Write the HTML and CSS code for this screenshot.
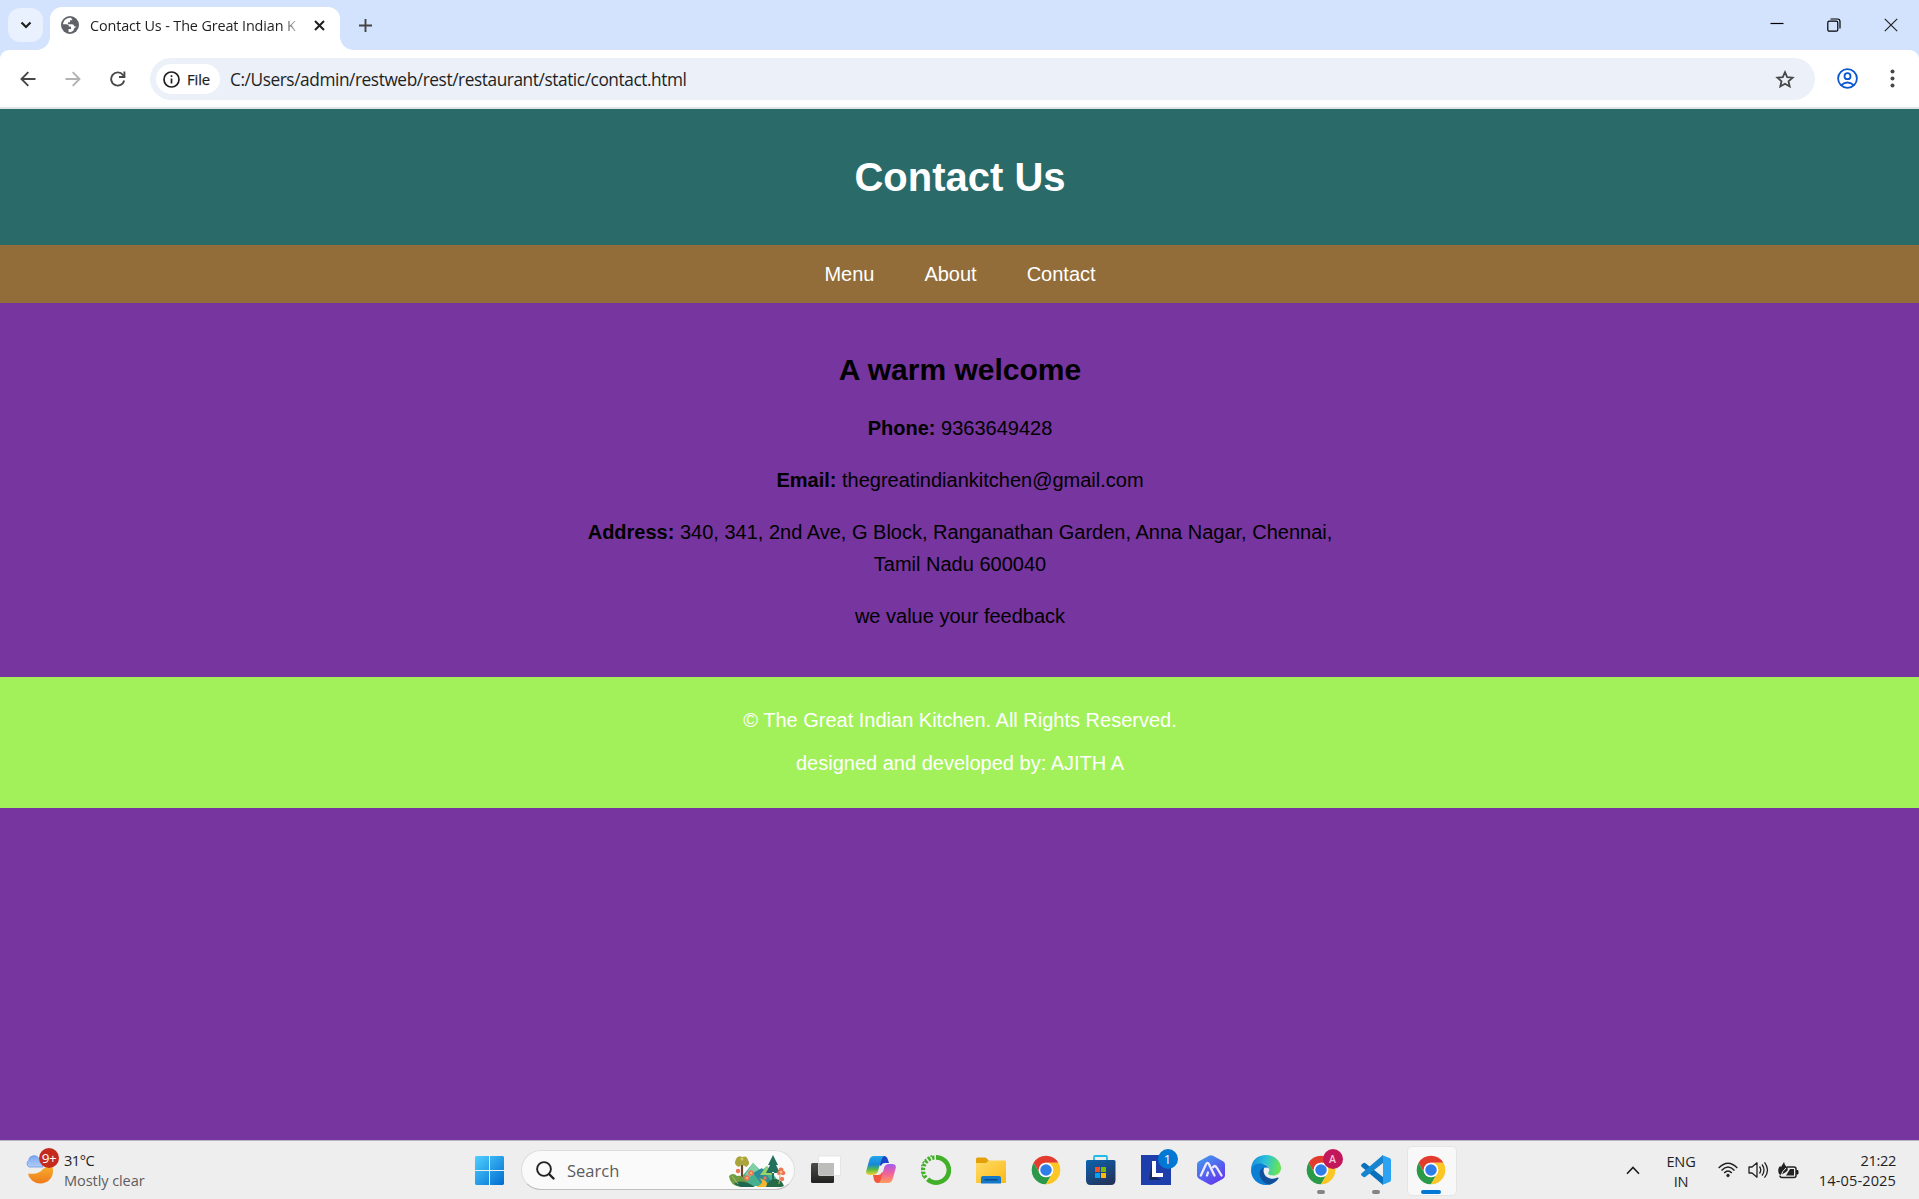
FILE: index.html
```html
<!DOCTYPE html>
<html lang="en">
<head>
<meta charset="utf-8">
<title>Contact Us - The Great Indian Kitchen</title>
<link rel="stylesheet" href="styles.css">
</head>
<body>
<svg class="defs" width="0" height="0" aria-hidden="true">
  <symbol id="chrome" viewBox="1 1 46 46">
    <path fill="#e33b2e" d="M24 13H43.05A22 22 0 0 0 4.95 13L14.47 29.5A11 11 0 0 1 24 13Z"/>
    <path fill="#2a9a48" d="M14.47 29.5L4.95 13A22 22 0 0 0 24 46L33.53 29.5A11 11 0 0 1 14.47 29.5Z"/>
    <path fill="#fcc624" d="M33.53 29.5L24 46A22 22 0 0 0 43.05 13H24A11 11 0 0 1 33.53 29.5Z"/>
    <circle cx="24" cy="24" r="11.2" fill="#fff"/><circle cx="24" cy="24" r="8.8" fill="#2f7de9"/>
  </symbol>
</svg>

<div class="tabstrip">
  <button class="tab-search" aria-label="Search tabs"><svg width="12" height="8" viewBox="0 0 12 8"><path d="M1.5 1.5L6 6L10.500 1.500" fill="none" stroke="#1f1f1f" stroke-width="2.2"/></svg></button>
  <div class="tab">
    <svg class="globe" width="18" height="18" viewBox="0 0 18 18"><circle cx="9" cy="9" r="9" fill="#5f6368"/><path d="M10 1.800A7.300 7.300 0 0 0 1.800 8.200L5.600 8.300Q8 8.500 8 10.500L10 10.800V13H7.500V15.800L9.500 16.200Q13 15 13 12.500L15.500 10.500H13.500Q12.800 8.300 11 8.200H7V6.300H9V4.200H11.500Z" fill="#fff"/></svg>
    <span class="tab-title">Contact Us - The Great Indian K</span>
    <svg class="tab-close" width="11" height="11" viewBox="0 0 11 11"><path d="M1 1L10 10M10 1L1 10" stroke="#1f1f1f" stroke-width="2"/></svg>
  </div>
  <svg class="new-tab" width="13" height="13" viewBox="0 0 13 13"><path d="M6.500 0V13M0 6.500H13" stroke="#444" stroke-width="1.900"/></svg>
  <div class="window-controls">
    <svg width="14" height="14" viewBox="0 0 14 14"><path d="M.5 5.500H13.500" stroke="#000" stroke-width="1.200"/></svg>
    <svg width="14" height="14" viewBox="0 0 14 14"><rect x=".8" y="3.200" width="10" height="10" rx="1.500" fill="none" stroke="#000" stroke-width="1.200"/><path d="M3.500 1H10.500Q13 1 13 3.500V10.500" fill="none" stroke="#000" stroke-width="1.200"/></svg>
    <svg width="14" height="14" viewBox="0 0 14 14"><path d="M.8.8L13.200 13.200M13.200.8L.8 13.200" stroke="#222" stroke-width="1.200"/></svg>
  </div>
</div>

<div class="toolbar-wrap">
<div class="toolbar">
  <svg class="nav-icon" width="16" height="16" viewBox="0 0 16 16"><path d="M15.500 8H2M8.300 1.200L1.500 8L8.300 14.800" fill="none" stroke="#474747" stroke-width="1.900"/></svg>
  <svg class="nav-icon" width="16" height="16" viewBox="0 0 16 16"><path d="M.5 8H14M7.700 1.200L14.500 8L7.700 14.800" fill="none" stroke="#b2b2b2" stroke-width="1.900"/></svg>
  <svg class="nav-icon" width="16" height="16" viewBox="0 0 16 16"><path d="M14.200 9.500A6.600 6.600 0 1 1 13 4L14.500 5.800" fill="none" stroke="#474747" stroke-width="1.900"/><path d="M14.400.6V6H9" fill="none" stroke="#474747" stroke-width="1.900"/></svg>
  <div class="omnibox">
    <span class="chip"><svg width="17" height="17" viewBox="0 0 17 17"><circle cx="8.500" cy="8.500" r="7.500" fill="none" stroke="#1f1f1f" stroke-width="1.700"/><path d="M8.500 7.500V12.500M8.500 4.300V6.100" stroke="#1f1f1f" stroke-width="1.700"/></svg><span class="chip-label">File</span></span>
    <span class="url">C:/Users/admin/restweb/rest/restaurant/static/contact.html</span>
    <svg class="star" width="20" height="19" viewBox="0 0 20 19"><path d="M10 2.200L12.200 7.100L17.600 7.600L13.500 11.200L14.700 16.500L10 13.700L5.300 16.500L6.500 11.200L2.400 7.600L7.800 7.100Z" fill="none" stroke="#474747" stroke-width="1.800"/></svg>
  </div>
  <svg class="profile" width="21" height="21" viewBox="0 0 21 21" fill="none" stroke="#0b57d0" stroke-width="1.800"><circle cx="10.500" cy="10.500" r="9.400"/><circle cx="10.500" cy="8.200" r="3"/><path d="M4.200 17.200Q10.500 11.900 16.800 17.200"/></svg>
  <svg class="more" width="5" height="19" viewBox="0 0 5 19" fill="#474747"><circle cx="2.500" cy="2.500" r="2"/><circle cx="2.500" cy="9.500" r="2"/><circle cx="2.500" cy="16.500" r="2"/></svg>
</div>
</div>

<div class="page">
  <header class="page-header"><h1>Contact Us</h1></header>
  <nav class="page-nav"><a>Menu</a><a>About</a><a>Contact</a></nav>
  <main class="content">
    <h2>A warm welcome</h2>
    <p><strong>Phone:</strong> 9363649428</p>
    <p><strong>Email:</strong> thegreatindiankitchen@gmail.com</p>
    <p><strong>Address:</strong> 340, 341, 2nd Ave, G Block, Ranganathan Garden, Anna Nagar, Chennai, Tamil Nadu 600040</p>
    <p>we value your feedback</p>
  </main>
  <footer class="page-footer">
    <p>© The Great Indian Kitchen. All Rights Reserved.</p>
    <p>designed and developed by: AJITH A</p>
  </footer>
</div>

<div class="taskbar">
  <div class="weather">
    <div class="weather-icon">
      <svg width="30" height="30" viewBox="0 0 30 30"><defs><linearGradient id="mn" x2="0" y2="1"><stop stop-color="#f9b52e"/><stop offset="1" stop-color="#ee7a1c"/></linearGradient><linearGradient id="cl" x2="0" y2="1"><stop stop-color="#7ba6ec"/><stop offset="1" stop-color="#b0ccfa"/></linearGradient></defs><path d="M18 14Q14 20 3 18.500A12.500 11.500 0 0 0 15 28.500A12.500 12.500 0 0 0 28 15Q28 12 26 9Z" fill="url(#mn)"/><path d="M4 12A4 4 0 0 1 3.500 5.500A5.500 5.500 0 0 1 14 4Q18 5 18 12Z" fill="url(#cl)" stroke="#6d9ae6" stroke-width=".8"/></svg>
      <span class="alert">9+</span>
    </div>
    <div class="weather-text"><span>31°C</span><span class="cond">Mostly clear</span></div>
  </div>
  <div class="cell"><svg width="29" height="29" viewBox="0 0 29 29"><defs><linearGradient id="win" x2="1" y2="1"><stop stop-color="#4fd0ff"/><stop offset="1" stop-color="#006cd0"/></linearGradient></defs><path fill="url(#win)" d="M1 0H14V14H0V1ZM15 0H28L29 1V14H15ZM0 15H14V29H1L0 28ZM15 15H29V28L28 29H15Z"/></svg></div>
  <div class="search">
    <svg width="19" height="19" viewBox="0 0 19 19"><circle cx="8" cy="8" r="6.900" fill="none" stroke="#222" stroke-width="1.900"/><path d="M13 13L17.500 17.500" stroke="#222" stroke-width="2.400" stroke-linecap="round"/></svg>
    <span class="search-label">Search</span>
    <svg class="scene" width="58" height="33" viewBox="0 0 58 33">
      <path d="M12 24L25 8L33 16L39 11L54 31H14Z" fill="#46b08f"/><path d="M17 20L25 8L31 15L22 22Z" fill="#7fd0a4"/><path d="M25 18L34 13L45 29L35 31Z" fill="#2c8c98"/>
      <path d="M32 20L39 11L44 20Z" fill="#9bd46d"/><path d="M28 32Q38 28 31 23Q42 26 38 32Z" fill="#f6b52c"/>
      <path d="M14 8V23" stroke="#6b4528" stroke-width="2.200"/><path d="M8 4Q10 0 14 2Q19 0 20 5Q23 9 18 12Q14 8 11 12Q5 10 8 4Z" fill="#a9a43c"/>
      <path d="M1 21Q5 17 9 21Q15 20 18 26L24 32H13Q2 31 1 21Z" fill="#6f9c43"/><path d="M6 29Q13 23 27 32H13Z" fill="#1e6850"/>
      <path d="M45 0L40 10H42L38 18H52L48 10H50ZM44 17H46V25H44Z" fill="#22705e"/>
      <path d="M38 32Q41 23 48 24Q54 25 56 31L53 32Z" fill="#266a46"/>
      <g fill="#ef7656"><circle cx="10" cy="16" r="2.200"/><circle cx="23" cy="18" r="2.800"/><circle cx="19" cy="23" r="2.800"/><circle cx="53" cy="15" r="2.500"/><circle cx="55" cy="18" r="2.300"/><circle cx="51" cy="18" r="2"/><circle cx="54" cy="24" r="2.200"/><circle cx="37" cy="23" r="1.700"/></g>
      <g fill="#ffc27c"><circle cx="23" cy="18" r="1"/><circle cx="19" cy="23" r="1"/><circle cx="53" cy="17" r="1.300"/></g>
      <path d="M52 20L51 29M4 21L10 29" stroke="#b0bd63"/><circle cx="14" cy="4" r="1.500" fill="#d4c95a"/>
    </svg>
  </div>
  <div class="cell"><svg width="30" height="30" viewBox="0 0 30 30"><defs><linearGradient id="tk" x2="0" y2="1"><stop stop-color="#4c4c48"/><stop offset="1" stop-color="#222"/></linearGradient></defs><rect y="8" width="23" height="20" rx="1.500" fill="url(#tk)"/><rect x="7.500" y="1" width="22" height="19.500" rx="1" fill="#fff" stroke="#ddd" stroke-width=".7"/><path d="M8 8H23V20H8Z" fill="#bdbdbb"/></svg></div>
  <div class="cell"><svg width="30" height="30" viewBox="0 0 30 30"><defs><linearGradient id="c1" x2="0" y2="1"><stop stop-color="#22a6ee"/><stop offset=".45" stop-color="#1788d8"/><stop offset=".7" stop-color="#54b848"/><stop offset="1" stop-color="#f4d52c"/></linearGradient><linearGradient id="c2" x2="0" y2="1"><stop stop-color="#a65af0"/><stop offset=".5" stop-color="#f0629a"/><stop offset="1" stop-color="#ff9d5c"/></linearGradient></defs><path d="M12 1H18Q21 1 22 5L23 8H19Q16 8 15 11L12 8Z" fill="#1a45c8"/><path d="M18 28H12Q9 28 8 25L7 20H12Q15 20 16 17L19 19Z" fill="#f3563c"/><path d="M8 1H18Q16 2 15 6L12 16Q11 20 6 20H4Q-1 20 .5 15L3 6Q4 1 8 1Z" fill="url(#c1)"/><path d="M22 28H12Q14 28 15 24L18 13Q19 9 23 9H26Q31 9 29.500 14L27 23Q26 28 22 28Z" fill="url(#c2)"/></svg></div>
  <div class="cell"><svg width="30" height="30" viewBox="0 0 30 30"><path d="M15 0A15 15 0 1 1 5 26L8.200 22.500A10.300 10.300 0 1 0 15 4.700Z" fill="#43b02a"/><g fill="none" stroke="#43b02a"><path d="M13.500 2.500A12.500 12.500 0 0 0 5.500 23.500" stroke-width="4" stroke-dasharray="2.500 1.500"/><path d="M11 .8A14.400 14.400 0 0 0 3 23" stroke-width="1.500" stroke-dasharray="1.800 1.600"/></g></svg></div>
  <div class="cell"><svg width="30" height="27" viewBox="0 0 30 27"><defs><linearGradient id="fd" x2="1" y2="1"><stop stop-color="#ffdc68"/><stop offset="1" stop-color="#fbb915"/></linearGradient></defs><path d="M0 6V2Q0 .5 1.500.5H9Q10.500.5 13 4V7H0Z" fill="#e3a008"/><path d="M0 6H10L13 3.500H29Q30 3.500 30 4.500V26H0Z" fill="url(#fd)"/><path d="M5 26.500V21Q5 19 7 19H23Q25 19 25 21V26.500Z" fill="#1579c9"/><path d="M8.500 22.800H21.500" stroke="#06427f" stroke-width="1.200"/></svg></div>
  <div class="cell"><svg width="30" height="30"><use href="#chrome"/></svg></div>
  <div class="cell"><svg width="30" height="30" viewBox="0 0 30 30"><defs><linearGradient id="st" x2=".6" y2="1"><stop stop-color="#0c63b0"/><stop offset="1" stop-color="#22355f"/></linearGradient></defs><path d="M8 6V2Q8 1 9 1H20Q21 1 21 2V6" fill="none" stroke="#20bdea" stroke-width="1.800"/><path d="M0 6.500Q0 5 1.500 5H28Q29.500 5 29.500 6.500V25Q29.500 30 25 30H4.500Q0 30 0 25Z" fill="url(#st)"/><path d="M9 12H14V17H9Z" fill="#f25022"/><path d="M15 12H20V17H15Z" fill="#7fba00"/><path d="M9 18H14V23H9Z" fill="#00a4ef"/><path d="M15 18H20V23H15Z" fill="#ffb900"/></svg></div>
  <div class="cell"><svg width="30" height="30" viewBox="0 0 30 30"><path d="M0 0H30V30H0Z" fill="#1e3eab"/><path d="M11 7L8 25H20L14 21Z" fill="#14295f"/><path d="M11 6H15V18H22V22H11Z" fill="#fff"/></svg><span class="badge blue">1</span></div>
  <div class="cell"><svg width="28" height="30" viewBox="0 0 28 30"><defs><linearGradient id="am" x2=".7" y2="1"><stop stop-color="#3ea0ee"/><stop offset="1" stop-color="#6438ee"/></linearGradient></defs><path d="M12 .7Q14-.4 16 .7L26 6.300Q28 7.400 28 9.500V20.500Q28 22.600 26 23.700L16 29.300Q14 30.400 12 29.300L2 23.700Q0 22.600 0 20.500V9.500Q0 7.400 2 6.300Z" fill="url(#am)"/><path d="M3.800 20.500L9 9.200Q10.500 6.500 12 9.200L17.500 20.500M10 20.500L11 17.500M16 12.200Q18.200 9.500 20 13L24.500 20.500" fill="none" stroke="#eeeaff" stroke-width="2.300" stroke-linecap="round" stroke-linejoin="round"/></svg></div>
  <div class="cell"><svg width="30" height="30" viewBox="0 0 30 30"><defs><linearGradient id="eg" x2="1" y2=".2"><stop stop-color="#1686d8"/><stop offset=".5" stop-color="#29bfdc"/><stop offset="1" stop-color="#66e35b"/></linearGradient></defs><path d="M0 15C0 5 7 0 15 0C24 0 30 6.500 30 13C30 18 26 20.500 22 20.500C18 20.500 16.500 19 17.500 17.500C20 13 16 9 11 9C5 9 1 12 0 15Z" fill="url(#eg)"/><path d="M0 15C1 10.500 5 8 10 8.500C14 9 17 11 18 13.500C15 11 11 13 11 17C11 23 18 27 26 25Q21 30 15 30C6 30 0 23 0 15Z" fill="#0c7fd4"/><path d="M13 12.500C9 14 8 17 9 21C10.500 26 15 29.500 19 29.500Q24 28 27.500 23.500Q28 22 26 22.800C19 26 10.500 21 13 12.500Z" fill="#104f9c"/></svg></div>
  <div class="cell running"><svg width="30" height="30"><use href="#chrome"/></svg><span class="badge pink">A</span></div>
  <div class="cell running"><svg width="30" height="30" viewBox="0 0 30 30"><path d="M0 10L2.500 8Q3.500 7.500 4.500 8.300L22 22V30L.3 11.500Z" fill="#0a70bd"/><path d="M0 20L2.500 22Q3.500 22.500 4.500 21.700L22 8V0L.3 18.500Z" fill="#1684ce"/><path d="M21 0L28.500 3Q30 3.700 30 5V25Q30 26.300 28.500 27L21 30Q22 29 22 27V3Q22 1 21 0Z" fill="#2ba3f2"/></svg></div>
  <div class="cell active"><svg width="30" height="30"><use href="#chrome"/></svg></div>
  <div class="tray">
    <svg class="chevron" width="14" height="9" viewBox="0 0 14 9"><path d="M1 7.800L7 1.500L13 7.800" fill="none" stroke="#1c1c1c" stroke-width="1.600"/></svg>
    <div class="lang"><span>ENG</span><span>IN</span></div>
    <svg class="wifi" width="20" height="16" viewBox="0 0 20 16" fill="none" stroke="#222" stroke-width="1.500"><path d="M.7 6Q10-3.500 19.300 6M3.500 8.500Q10 1.700 16.500 8.500M6.200 11Q10 6.800 13.800 11"/><circle cx="10" cy="13.500" r="1.400" fill="#222" stroke-width=".5"/></svg>
    <svg class="sound" width="21" height="18" viewBox="0 0 21 18" fill="none" stroke="#222" stroke-width="1.300"><path d="M1 6H4L9 1.800V16.200L4 12H1Z" stroke-linejoin="round"/><path d="M11.500 5.500Q14 9 11.500 12.500M14 3.500Q18 9 14 14.500M16.500 1.300Q22.500 9 16.500 16.700"/></svg>
    <svg class="battery" width="21" height="17" viewBox="0 0 21 17"><path d="M9 5H16Q18 5 18 7V13.500Q18 15.500 16 15.500H4Q2 15.500 2 13.500" fill="none" stroke="#222" stroke-width="1.500"/><path d="M18.500 8.500H20V12H18.500Z" stroke="#222"/><path d="M8 13.500L12 7H16V13.500ZM1 12Q-1 7 2 4L3 5L6 0L7 3L9 5Q11 8 8 10L3 13Z" fill="#222"/><path d="M3 14Q4 9 8 6" fill="none" stroke="#eee"/></svg>
    <div class="clock"><span>21:22</span><span class="date">14-05-2025</span></div>
  </div>
</div>
</body>
</html>
```
FILE: styles.css
```css
* { box-sizing: border-box; }
html, body { height: 100%; }
body { margin: 0; display: flex; flex-direction: column; overflow: hidden; background: #76359f; font-family: "Open Sans", "Noto Sans", sans-serif; color: #1f1f1f; }
svg { display: block; flex: none; }
.defs { position: absolute; }
span { white-space: nowrap; }

/* Browser tab strip */
.tabstrip { flex: none; height: 50px; display: flex; background: #d3e3fd; padding-left: 8px; }
.tab-search { width: 35px; height: 34px; margin-top: 8px; border: 0; border-radius: 12px; background: #e9f0fe; padding: 0; display: flex; align-items: center; justify-content: center; }
.tab { position: relative; width: 290px; height: 43px; margin: 7px 0 0 7px; padding: 0 15px 7px 11px; display: flex; align-items: center; background: #fff; border-radius: 12px 12px 0 0; }
.tab::before, .tab::after { content: ""; position: absolute; bottom: 0; width: 13px; height: 13px; }
.tab::before { left: -13px; background: radial-gradient(circle at 0 0, transparent 12.5px, #fff 13px); }
.tab::after { right: -13px; background: radial-gradient(circle at 100% 0, transparent 12.5px, #fff 13px); }
.tab-title { margin-left: 11px; margin-top: 1px; font-size: 14.4px; line-height: 20px; letter-spacing: -0.12px; -webkit-mask-image: linear-gradient(90deg, #000 192px, transparent 213px); mask-image: linear-gradient(90deg, #000 192px, transparent 213px); }
.tab-close { margin-left: auto; }
.new-tab { margin: 19px 0 0 19px; }
.window-controls { margin-left: auto; display: flex; gap: 43px; padding: 18px 21px 0 0; }

/* Browser toolbar */
.toolbar-wrap { flex: none; background: #d3e3fd; }
.toolbar { height: 59px; display: flex; align-items: center; background: #fff; border-radius: 9px 9px 0 0; border-bottom: 2px solid #dfe5e4; padding: 0 24px 0 20px; }
.nav-icon { margin-right: 29px; }
.omnibox { flex: 1; height: 42px; margin: 1px 22px 0 -5px; display: flex; align-items: center; border-radius: 21px; background: #ebf0f9; padding: 0 20px 0 6px; }
.chip { width: 64px; height: 30px; border-radius: 15px; background: #fff; display: flex; align-items: center; padding-left: 7px; gap: 7px; }
.chip-label { font-size: 14.8px; font-weight: 500; letter-spacing: -0.1px; -webkit-text-stroke: 0.25px #1f1f1f; }
.url { margin-left: 10px; font-size: 17.3px; letter-spacing: -0.43px; }
.star { margin-left: auto; }
.more { margin-left: 32px; }

/* Restaurant page */
.page { flex: 1; font-family: "Liberation Sans", Arial, sans-serif; font-size: 20px; color: #000; text-align: center; }
.page-header { height: 136px; padding-left: 1px; display: flex; align-items: center; justify-content: center; background: #2a6b6a; color: #fff; }
h1 { margin: 0; font-size: 40px; line-height: 46px; }
.page-nav { display: flex; justify-content: center; gap: 50px; padding: 17.5px 0 17.5px 1px; line-height: 23px; background: #926d3a; color: #fff; }
.content { width: 801px; margin: 0 auto; padding: 25px 25px 25px 26px; line-height: 32px; }
.content h2 { margin: 25px 0; font-size: 30px; line-height: 34px; }
.content p { margin: 20px 0; }
.page-footer { padding: 11.5px 0 13.5px 1px; background: #a3f15a; color: #fff; line-height: 23px; display: flow-root; }
.page-footer p { margin: 20px 0; }

/* Desktop taskbar */
.taskbar { flex: none; height: 59px; display: flex; align-items: center; background: #eee; border-top: 1px solid #b9b4bd; }
.weather { width: 461.5px; padding-left: 25px; display: flex; gap: 9px; }
.weather-icon { position: relative; width: 30px; height: 38px; padding-top: 4px; }
.alert { position: absolute; left: 14px; top: -3px; width: 20px; height: 20px; border-radius: 50%; background: #c42b1c; color: #fff; font-size: 13.5px; line-height: 20px; text-align: center; letter-spacing: -0.4px; }
.weather-text { display: flex; flex-direction: column; font-size: 14.6px; line-height: 20px; letter-spacing: -0.5px; margin-top: -1px; }
.cond { color: #5d5d5d; letter-spacing: -0.1px; }
.cell { position: relative; width: 55px; height: 58px; flex: none; display: flex; align-items: center; justify-content: center; }
.search { flex: none; width: 274px; height: 40px; margin: 0 3.5px 0 4.5px; padding: 0 8px 0 14px; display: flex; align-items: center; background: #fafafa; border: 1px solid #ddd; border-bottom-color: #bebebe; border-radius: 20px; }
.search-label { margin-left: 12px; font-size: 16.5px; color: #5c5c5c; }
.scene { margin-left: auto; margin-top: 2px; }
.badge { position: absolute; left: 29px; top: 8px; width: 20px; height: 20px; border-radius: 50%; color: #fff; font-size: 13px; line-height: 20px; text-align: center; }
.blue { background: #0078d4; }
.pink { background: #c2185b; color: #f7c5d8; font-size: 10.5px; font-weight: 600; }
.running::after { content: ""; position: absolute; bottom: 5px; width: 8px; height: 4px; border-radius: 2px; background: #858585; }
.active::before { content: ""; position: absolute; top: 5px; left: 3.5px; width: 48px; height: 48px; border: 1px solid #e5e5e5; border-radius: 5px; background: #f8f8f8; }
.active svg { position: relative; }
.active::after { content: ""; position: absolute; bottom: 5px; width: 20px; height: 4px; border-radius: 2px; background: #0078d4; }
.tray { margin-left: auto; padding-right: 23px; display: flex; align-items: center; font-size: 14.6px; line-height: 20px; }
.lang { width: 40px; margin: 1px 17px 0 21px; display: flex; flex-direction: column; align-items: center; letter-spacing: -0.2px; }
.wifi { margin-right: 10px; }
.sound { margin-right: 9px; }
.clock { width: 97px; display: flex; flex-direction: column; align-items: flex-end; margin-top: -1px; letter-spacing: -0.35px; }
.date { letter-spacing: 0.1px; }
```
